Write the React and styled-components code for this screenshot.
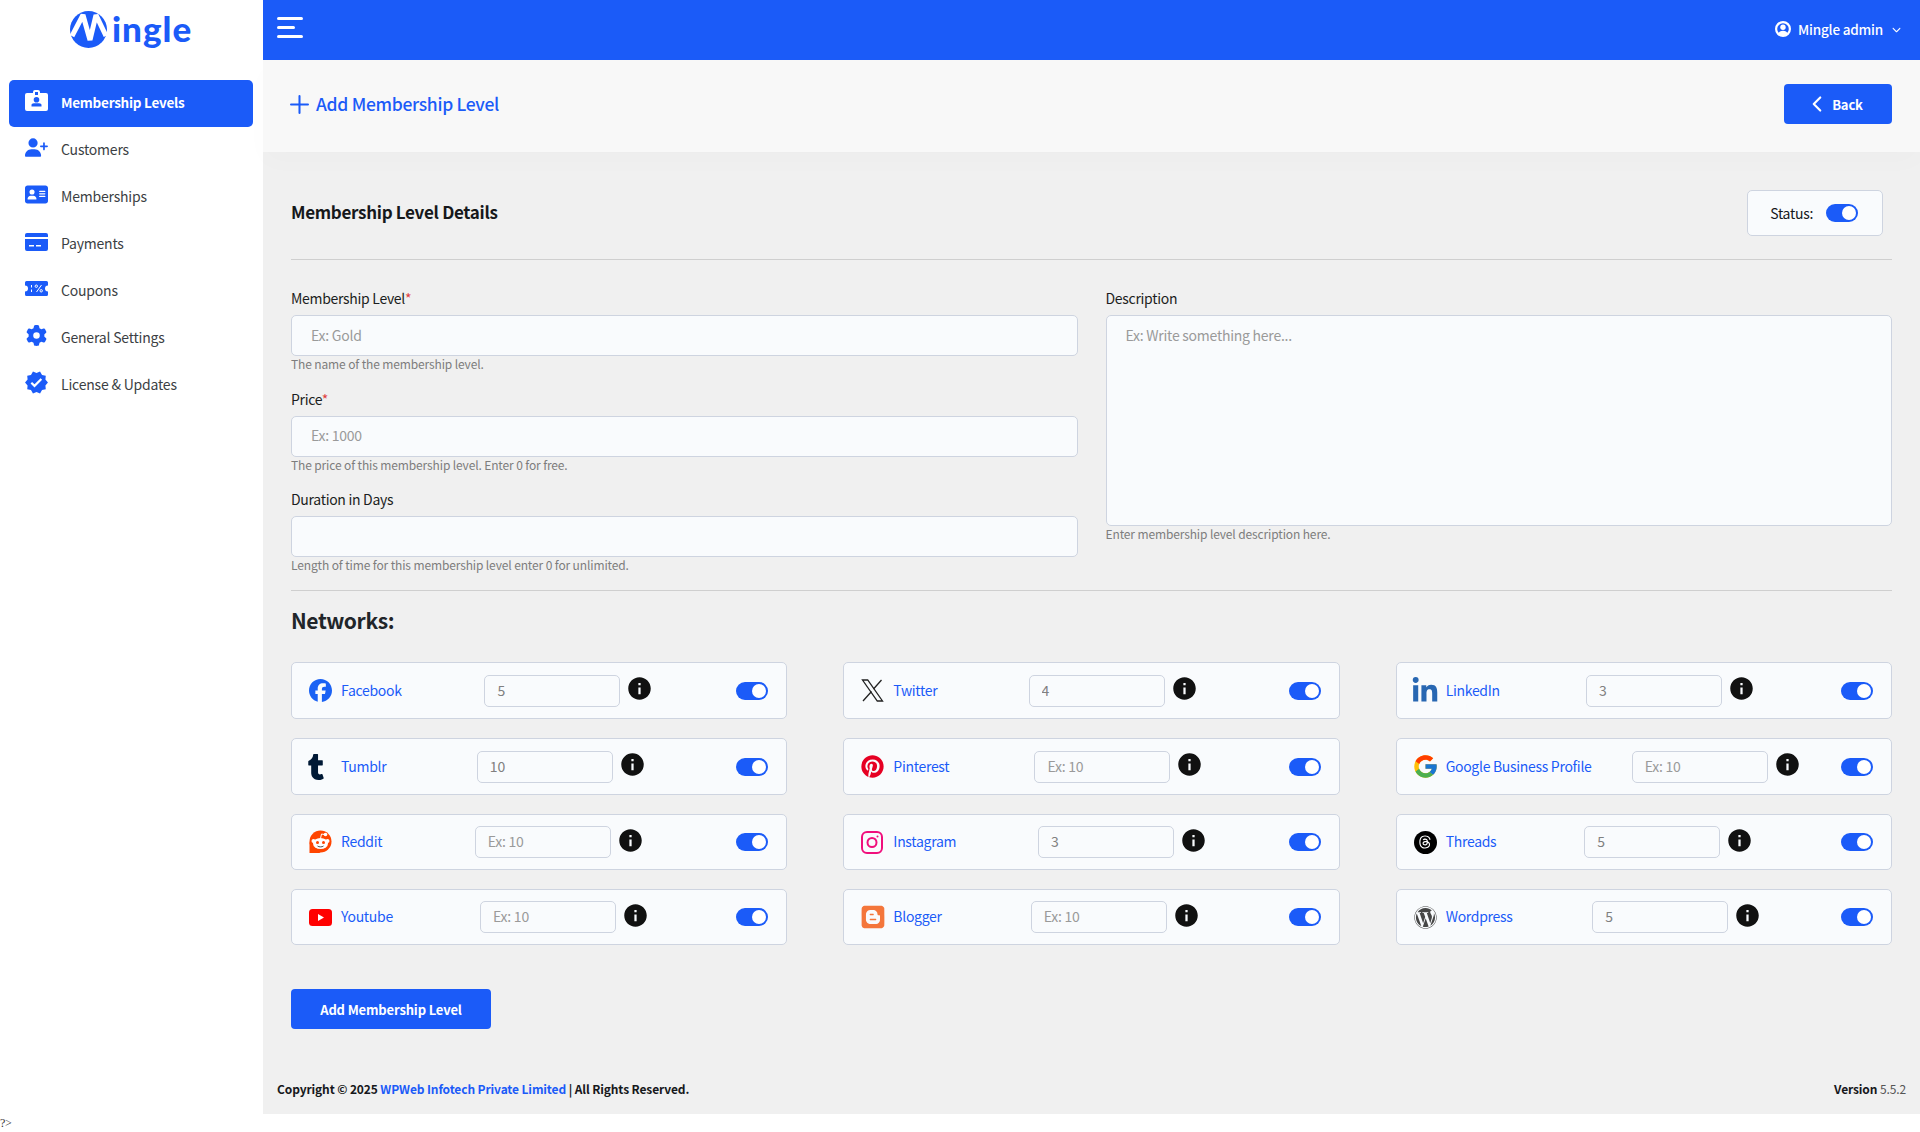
import styled, { createGlobalStyle } from 'styled-components';
import { FaAddressCard, FaBlogger, FaFacebook, FaLinkedinIn, FaPinterest, FaThreads, FaTumblr, FaUserPlus, FaWordpress, FaGear, FaChevronDown } from 'react-icons/fa6';
import { FcGoogle } from 'react-icons/fc';
import { MdVerified, MdInfo } from 'react-icons/md';
import { ChevronLeft, Plus } from 'lucide-react';

const BLUE = '#1b5bf8';

const GlobalStyle = createGlobalStyle`
  html, body { margin: 0; padding: 0; background: #fff; }
  body { font-family: "Noto Sans CJK SC", "Noto Sans", sans-serif; font-size: 14px; letter-spacing: -0.3px; color: #212529; }
  * { box-sizing: border-box; }
  input::placeholder, textarea::placeholder { color: #9a9a9a; opacity: 1; }
`;

const Page = styled.div`
  display: flex;
  min-height: 1114px;
`;

const Sidebar = styled.aside`
  width: 263px;
  flex-shrink: 0;
  background: #fff;
`;

const Logo = styled.div`
  display: flex;
  align-items: center;
  gap: 5px;
  height: 58px;
  padding-left: 70px;
  margin-bottom: 22px;
`;

const LogoText = styled.span`
  margin-top: -2px;
  font-family: "Lato", sans-serif;
  font-weight: 900;
  font-size: 35px;
  letter-spacing: 1px;
  line-height: 1;
  color: ${BLUE};
`;

const Nav = styled.nav`
  display: flex;
  flex-direction: column;
  padding: 0 10px 0 9px;
`;

const NavItem = styled.a`
  display: flex;
  align-items: center;
  gap: 13px;
  height: 47px;
  padding-left: 16px;
  padding-bottom: 4px;
  border-radius: 5px;
  font-size: ${({ $active }) => ($active ? '13.5px' : '14px')};
  letter-spacing: ${({ $active }) => ($active ? '-0.25px' : '-0.2px')};
  font-weight: ${({ $active }) => ($active ? 700 : 400)};
  color: ${({ $active }) => ($active ? '#fff' : '#3c3f44')};
  background: ${({ $active }) => ($active ? BLUE : 'transparent')};
`;

const NavIcon = styled.span`
  display: flex;
  align-items: center;
  justify-content: center;
  width: 23px;
  height: 23px;
  margin-top: -2px;
  flex-shrink: 0;
  color: ${({ $active }) => ($active ? '#fff' : BLUE)};

  svg {
    display: block;
    flex-shrink: 0;
  }
`;

const Main = styled.div`
  flex: 1;
  min-width: 0;
  display: flex;
  flex-direction: column;
  background: #f0f0f0;
`;

const TopBar = styled.header`
  display: flex;
  align-items: center;
  justify-content: space-between;
  height: 60px;
  padding: 0 19px 0 14px;
  background: ${BLUE};
`;

const Hamburger = styled.button`
  display: flex;
  flex-direction: column;
  gap: 6px;
  width: 26px;
  margin: -6px 0 0;
  padding: 0;
  border: 0;
  background: none;

  span {
    display: block;
    height: 3px;
    border-radius: 2px;
    background: #fff;
  }

  span:nth-child(2) {
    width: 18px;
  }
`;

const UserMenu = styled.div`
  display: flex;
  align-items: center;
  gap: 7px;
  margin-top: -2px;
  font-size: 13.5px;
  letter-spacing: -0.2px;
  font-weight: 500;
  color: #fff;

  svg:last-child {
    font-size: 9px;
    margin-left: 2px;
  }
`;

const SubBar = styled.div`
  position: relative;
  display: flex;
  align-items: center;
  justify-content: space-between;
  height: 92px;
  padding: 0 28px 4px;
  background: #f8f8f8;
  box-shadow: 0 10px 25px rgba(0, 0, 0, 0.015);
`;

const PageTitle = styled.h1`
  display: flex;
  align-items: center;
  gap: 8px;
  margin: -2px 0 0;
  font-size: 17.5px;
  letter-spacing: -0.3px;
  font-weight: 500;
  color: ${BLUE};

  svg {
    margin: 2px -6px 0;
  }
`;

const PrimaryButton = styled.button`
  display: flex;
  align-items: center;
  justify-content: center;
  gap: 11px;
  width: ${({ $width }) => $width}px;
  height: 40px;
  padding: 0;
  border: 0;
  border-radius: 4px;
  background: ${BLUE};
  color: #fff;
  font-family: inherit;
  font-size: 13px;
  letter-spacing: -0.15px;
  font-weight: 700;

  svg {
    margin: 0 -9px;
  }
`;

const Content = styled.main`
  flex: 1;
  padding: 38px 28px 0;
`;

const DetailsHead = styled.div`
  display: flex;
  align-items: center;
  justify-content: space-between;
  padding: 0 9px 23px 0;
  border-bottom: 1px solid #cfcfcf;
`;

const DetailsTitle = styled.h2`
  margin: -3px 0 0;
  font-size: 17px;
  letter-spacing: -0.3px;
  font-weight: 700;
  color: #16181b;
`;

const StatusBox = styled.div`
  display: flex;
  align-items: center;
  gap: 13px;
  height: 46px;
  padding: 0 24px 0 22px;
  border: 1px solid #ced4e0;
  border-radius: 5px;
  background: #f9fbfd;
  color: #16181b;
`;

const Toggle = styled.span`
  display: flex;
  justify-content: flex-end;
  align-items: center;
  flex-shrink: 0;
  width: 32px;
  height: 18px;
  padding: 0 2px;
  border-radius: 9px;
  background: ${BLUE};

  &::after {
    content: '';
    width: 14px;
    height: 14px;
    border-radius: 50%;
    background: #fff;
  }
`;

const FormGrid = styled.div`
  display: grid;
  grid-template-columns: 1fr 1fr;
  gap: 28px;
  margin-top: 29px;
  padding-bottom: 15px;
  border-bottom: 1px solid #cfcfcf;
`;

const FormColumn = styled.div`
  display: flex;
  flex-direction: column;
  gap: 15.5px;
`;

const Field = styled.div`
  display: flex;
  flex-direction: column;
`;

const Label = styled.label`
  height: 20px;
  margin-bottom: 6px;
  line-height: 19px;
  color: #1c1e21;

  em {
    font-style: normal;
    color: #e0413f;
  }
`;

const TextInput = styled.input`
  height: 41px;
  padding: 0 19px 2px;
  border: 1px solid #ced4e0;
  border-radius: 5px;
  background: #f9fbfd;
  font-family: inherit;
  font-size: 14px;
  letter-spacing: -0.25px;
  outline: none;
`;

const TextArea = styled.textarea`
  height: 211px;
  padding: 9px 19px;
  border: 1px solid #ced4e0;
  border-radius: 5px;
  background: #f9fbfd;
  font-family: inherit;
  font-size: 14px;
  letter-spacing: -0.25px;
  resize: none;
  outline: none;
`;

const Hint = styled.div`
  height: 18px;
  font-size: 12px;
  letter-spacing: -0.13px;
  line-height: 16px;
  color: #7d7d7d;
`;

const NetworksTitle = styled.h3`
  height: 30px;
  margin: 14px 0 27px;
  font-size: 21px;
  letter-spacing: -0.4px;
  font-weight: 700;
  line-height: 30px;
  color: #212529;
`;

const NetworkGrid = styled.div`
  display: grid;
  grid-template-columns: repeat(3, 1fr);
  grid-template-rows: 57px 57px 56px 56px;
  column-gap: 56px;
  row-gap: 19px;
`;

const NetworkCard = styled.div`
  display: flex;
  align-items: center;
  justify-content: space-between;
  padding: 0 18px 0 17px;
  border: 1px solid #ced4e0;
  border-radius: 5px;
  background: #f9fbfd;
`;

const NetworkName = styled.div`
  display: flex;
  align-items: center;
  gap: 9px;
  line-height: 18px;
  color: ${BLUE};
`;

const NetworkIcon = styled.span`
  display: flex;
  align-items: center;
  width: 23px;
  height: 24px;
  font-size: ${({ $size }) => $size || 23}px;
  color: ${({ $color }) => $color};

  svg {
    flex-shrink: 0;
    margin-left: ${({ $shift }) => $shift || 0}px;
  }
`;

const NetworkLabel = styled.span`
  margin-top: -2px;
`;

const LimitGroup = styled.div`
  display: flex;
  align-items: center;
  gap: 6px;
  color: #111;

  svg {
    font-size: 27px;
    margin-bottom: 4px;
  }
`;

const LimitInput = styled.input`
  width: 136px;
  height: 32px;
  padding: 0 12px 2px;
  border: 1px solid #ced4e0;
  border-radius: 5px;
  background: #f9fbfd;
  font-family: inherit;
  font-size: 14px;
  letter-spacing: -0.25px;
  color: #808080;
  outline: none;
`;

const SubmitRow = styled.div`
  margin-top: 44px;
`;

const Footer = styled.footer`
  display: flex;
  justify-content: space-between;
  align-items: center;
  height: 50px;
  padding: 0 14px 1px;
  font-size: 12px;
  letter-spacing: -0.12px;
  font-weight: 700;
  color: #16181b;

  a {
    color: ${BLUE};
  }

  span span {
    font-weight: 400;
    color: #555;
  }
`;

const Stray = styled.div`
  height: 18px;
  font-family: "Liberation Serif", serif;
  font-size: 12px;
  line-height: 18px;
  color: #333;
`;

const ThreadsBadge = styled.span`
  display: flex;
  align-items: center;
  justify-content: center;
  width: 23px;
  height: 23px;
  border-radius: 50%;
  background: #000;
  color: #fff;
  font-size: 14px;
`;

const MingleMark = () => (
  <svg width="37" height="37" viewBox="0 0 37 37">
    <circle cx="18.5" cy="18.5" r="18.5" fill={BLUE} />
    <path d="M2 25 13 4 20 29 26 4 36 25" fill="none" stroke="#fff" strokeWidth="5" strokeLinejoin="bevel" />
  </svg>
);

const UserIcon = () => (
  <svg width="16" height="16" viewBox="0 0 16 16" fill="#fff">
    <circle cx="8" cy="8" r="6.900" fill="none" stroke="#fff" strokeWidth="2.200" />
    <circle cx="8" cy="6.300" r="2.700" />
    <path d="M3.300 12.500c.6-1.700 2.300-2.800 4.700-2.800s4.100 1.100 4.700 2.800A6.500 6.500 0 0 1 8 14.500a6.500 6.500 0 0 1-4.700-2z" />
  </svg>
);

const BadgeIcon = () => (
  <svg width="23" height="21" viewBox="0 0 23 21" fill="currentColor">
    <path fillRule="evenodd" d="M2 3h6V2a2 2 0 0 1 2-2h3a2 2 0 0 1 2 2v1h6a2 2 0 0 1 2 2v14a2 2 0 0 1-2 2H2a2 2 0 0 1-2-2V5a2 2 0 0 1 2-2Zm8-1v3h3V2h-3Zm1.500 5a2.800 2.800 0 1 0 0 5.600 2.800 2.800 0 0 0 0-5.600ZM6.500 16.500h10v-1.500c0-1-1-1.800-2.500-1.800H9c-1.500 0-2.500.8-2.500 1.800Z" />
  </svg>
);

const PaymentIcon = () => (
  <svg width="23" height="18" viewBox="0 0 23 18" fill="currentColor">
    <path d="M2 0h19a2 2 0 0 1 2 2v2H0V2a2 2 0 0 1 2-2Z" />
    <path fillRule="evenodd" d="M0 6h23v10a2 2 0 0 1-2 2H2a2 2 0 0 1-2-2V6Zm4 6v1.400h5V12H4Zm7 0v1.400h5V12h-5Z" />
  </svg>
);

const CouponIcon = () => (
  <svg width="23" height="15" viewBox="0 0 23 15" fill="currentColor">
    <path d="M1.500 0h20a1.500 1.500 0 0 1 1.500 1.500v3a3 3 0 0 0 0 6v3a1.500 1.500 0 0 1-1.500 1.500h-20A1.500 1.500 0 0 1 0 13.500v-3a3 3 0 0 0 0-6v-3A1.500 1.500 0 0 1 1.500 0Z" />
    <g fill="none" stroke="#fff" strokeWidth="1">
      <path d="M6.500 4v2.500M6.500 8.500v2.500" />
      <circle cx="11.300" cy="5.200" r="1.200" />
      <circle cx="16.200" cy="9.800" r="1.200" />
      <path d="M16.500 4l-5 7" />
    </g>
  </svg>
);

const XIcon = () => (
  <svg width="23" height="23" viewBox="0 0 23 23" fill="none" stroke="#222" strokeWidth="1.300">
    <path d="M1.500 1h5.200l14.800 21h-5.200z" />
    <path d="M20.500 1l-8 9M10.500 12.500 2 22" />
  </svg>
);

const RedditIcon = () => (
  <svg width="23" height="24" viewBox="0 0 23 24">
    <circle cx="11.500" cy="11.500" r="11" fill="#ff4500" />
    <path d="M0.500 12v11h11z" fill="#ff4500" />
    <ellipse cx="11.500" cy="13.500" rx="7.500" ry="5.500" fill="#fff" />
    <circle cx="4.500" cy="11" r="2" fill="#fff" />
    <circle cx="18.500" cy="11" r="2" fill="#fff" />
    <circle cx="16.500" cy="4.500" r="1.800" fill="#fff" />
    <path d="M11.500 8.500 12.500 4l3 .5" fill="none" stroke="#fff" strokeWidth="1" />
    <circle cx="8.500" cy="12.500" r="1.500" fill="#ff4500" />
    <circle cx="14.500" cy="12.500" r="1.500" fill="#ff4500" />
    <path d="M8.500 16c1.500 1.200 4.500 1.200 6 0" fill="none" stroke="#222" strokeWidth=".8" />
  </svg>
);

const InstagramIcon = () => (
  <svg width="22" height="23" viewBox="0 0 22 23" fill="none" stroke="#f00f7c" strokeWidth="2">
    <rect x="1" y="1" width="20" height="21" rx="5" />
    <circle cx="11" cy="11.500" r="4.500" />
    <circle cx="16.500" cy="5.500" r="1" fill="#f00f7c" stroke="none" />
  </svg>
);

const ThreadsIcon = () => (
  <ThreadsBadge>
    <FaThreads />
  </ThreadsBadge>
);

const YoutubeIcon = () => (
  <svg width="23" height="17" viewBox="0 0 23 17">
    <rect width="23" height="17" rx="3.500" fill="#f00" />
    <path d="M9 5l6 3.500-6 3.500z" fill="#fff" />
  </svg>
);

const navItems = [
  { label: 'Membership Levels', icon: <BadgeIcon />, active: true },
  { label: 'Customers', icon: <FaUserPlus size={23} /> },
  { label: 'Memberships', icon: <FaAddressCard size={23} /> },
  { label: 'Payments', icon: <PaymentIcon /> },
  { label: 'Coupons', icon: <CouponIcon /> },
  { label: 'General Settings', icon: <FaGear size={21} /> },
  { label: 'License & Updates', icon: <MdVerified size={25} /> },
];

// listed row by row, same order as the grid
const networks = [
  { name: 'Facebook', icon: <FaFacebook />, color: '#1b62f4', value: '5' },
  { name: 'Twitter', icon: <XIcon />, value: '4' },
  { name: 'LinkedIn', icon: <FaLinkedinIn />, color: '#2867b2', value: '3', size: 28, shift: -2.5 },
  { name: 'Tumblr', icon: <FaTumblr />, color: '#001935', value: '10', size: 26, shift: -6 },
  { name: 'Pinterest', icon: <FaPinterest />, color: '#e60023' },
  { name: 'Google Business Profile', icon: <FcGoogle />, size: 27, shift: -2 },
  { name: 'Reddit', icon: <RedditIcon /> },
  { name: 'Instagram', icon: <InstagramIcon />, value: '3' },
  { name: 'Threads', icon: <ThreadsIcon />, value: '5' },
  { name: 'Youtube', icon: <YoutubeIcon /> },
  { name: 'Blogger', icon: <FaBlogger />, color: '#f4763b', size: 26, shift: -1.5 },
  { name: 'Wordpress', icon: <FaWordpress />, color: '#464646', value: '5' },
];

export default function App() {
  return (
    <>
      <GlobalStyle />
      <Page>
        <Sidebar>
          <Logo>
            <MingleMark />
            <LogoText>ingle</LogoText>
          </Logo>
          <Nav>
            {navItems.map((item) => (
              <NavItem key={item.label} $active={item.active}>
                <NavIcon $active={item.active}>{item.icon}</NavIcon>
                {item.label}
              </NavItem>
            ))}
          </Nav>
        </Sidebar>

        <Main>
          <TopBar>
            <Hamburger aria-label="Menu">
              <span />
              <span />
              <span />
            </Hamburger>
            <UserMenu>
              <UserIcon />
              Mingle admin
              <FaChevronDown />
            </UserMenu>
          </TopBar>

          <SubBar>
            <PageTitle>
              <Plus size={29} strokeWidth={1.7} />
              Add Membership Level
            </PageTitle>
            <PrimaryButton $width={108}>
              <ChevronLeft size={26} strokeWidth={2} />
              Back
            </PrimaryButton>
          </SubBar>

          <Content>
            <DetailsHead>
              <DetailsTitle>Membership Level Details</DetailsTitle>
              <StatusBox>
                Status:
                <Toggle />
              </StatusBox>
            </DetailsHead>

            <FormGrid>
              <FormColumn>
                <Field>
                  <Label>Membership Level<em>*</em></Label>
                  <TextInput placeholder="Ex: Gold" />
                  <Hint>The name of the membership level.</Hint>
                </Field>
                <Field>
                  <Label>Price<em>*</em></Label>
                  <TextInput placeholder="Ex: 1000" />
                  <Hint>The price of this membership level. Enter 0 for free.</Hint>
                </Field>
                <Field>
                  <Label>Duration in Days</Label>
                  <TextInput />
                  <Hint>Length of time for this membership level enter 0 for unlimited.</Hint>
                </Field>
              </FormColumn>
              <FormColumn>
                <Field>
                  <Label>Description</Label>
                  <TextArea placeholder="Ex: Write something here..." />
                  <Hint>Enter membership level description here.</Hint>
                </Field>
              </FormColumn>
            </FormGrid>

            <NetworksTitle>Networks:</NetworksTitle>
            <NetworkGrid>
              {networks.map((network) => (
                <NetworkCard key={network.name}>
                  <NetworkName>
                    <NetworkIcon $color={network.color} $size={network.size} $shift={network.shift}>
                      {network.icon}
                    </NetworkIcon>
                    <NetworkLabel>{network.name}</NetworkLabel>
                  </NetworkName>
                  <LimitGroup>
                    <LimitInput placeholder="Ex: 10" defaultValue={network.value} />
                    <MdInfo />
                  </LimitGroup>
                  <Toggle />
                </NetworkCard>
              ))}
            </NetworkGrid>

            <SubmitRow>
              <PrimaryButton $width={200}>Add Membership Level</PrimaryButton>
            </SubmitRow>
          </Content>

          <Footer>
            <span>
              Copyright © 2025 <a>WPWeb Infotech Private Limited</a> | All Rights Reserved.
            </span>
            <span>
              Version <span>5.5.2</span>
            </span>
          </Footer>
        </Main>
      </Page>
      <Stray>?&gt;</Stray>
    </>
  );
}
